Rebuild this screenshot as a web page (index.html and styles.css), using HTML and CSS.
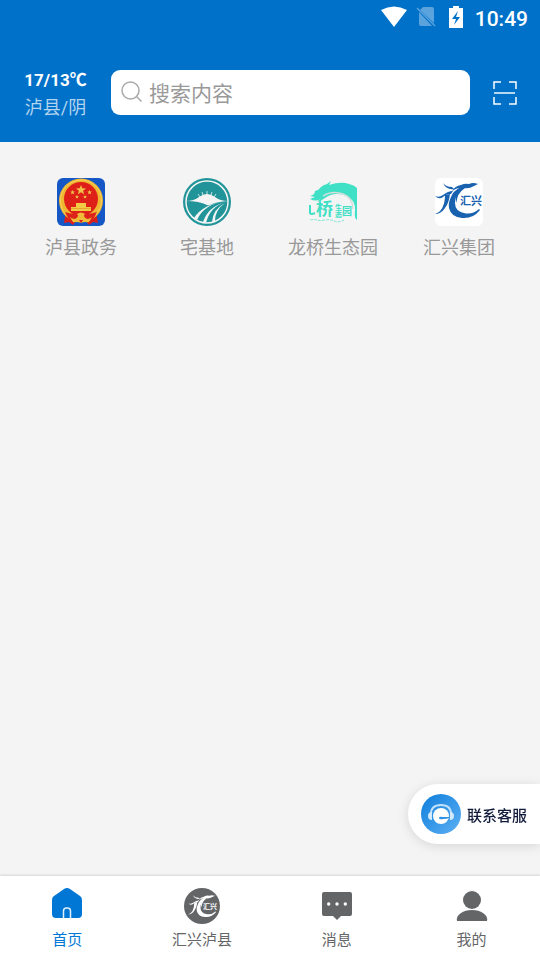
FILE: index.html
```html
<!DOCTYPE html>
<html lang="zh-CN">
<head>
<meta charset="utf-8">
<meta name="viewport" content="width=device-width, initial-scale=1">
<title>首页</title>
<link rel="stylesheet" href="styles.css">
</head>
<body>
<svg class="defs" aria-hidden="true">
  <symbol id="crane" viewBox="0 0 48 48">
    <path d="M8 5q3 4 9 4l2 2q-8 1-11-6z"/>
    <path d="M0 18q4 2 8-1 5-4 10-4l-2 3q-5 0-8 3-4 3-8-1z"/>
    <path d="M10 17l5-1q-1 9-5 14-4 6-10 6 7-3 8-8 2-4 2-11z"/>
    <path d="M17 13q3-5 9-6 4-2 8-1 4-2 9 0l-4 2q-5 3-10 2-6-1-12 3z"/>
    <path d="M26 9q-8 4-10 10-3 6-2 11 2 9 13 10 11 1 18-8l-1-1q-7 6-15 4-9-2-9-10 0-10 9-16z"/>
    <path d="M30 10q-9 6-8 15-4-9 4-15z"/>
  </symbol>
</svg>
<div class="app">
  <header class="top">
    <div class="status">
      <svg width="26" height="22" viewBox="0 0 26 22"><path d="M0 4Q13-3 26 4L13 21z" fill="#fff"/></svg>
      <svg class="sim" width="20" height="22" viewBox="0 0 20 22"><path d="M7 1h9q2 0 2 2v14L4 4zM3 6l13 14H5q-2 0-2-2z" fill="#5ba3dc"/><path d="M1 2l18 18" stroke="#5ba3dc" stroke-width="1.5"/></svg>
      <svg class="battery" width="14" height="22" viewBox="0 0 14 22"><path d="M4 0h6v2h4v20H0V2h4z" fill="#fff"/><path d="M9 5l-6 8h4l-2 6 6-8H7z" fill="#0071c9"/></svg>
      <time>10:49</time>
    </div>
    <div class="toolbar">
      <div class="weather"><strong>17/13℃</strong><span>泸县/阴</span></div>
      <label class="search">
        <svg width="22" height="22" viewBox="0 0 22 22" fill="none" stroke="#aaa" stroke-width="1.5"><circle cx="9.500" cy="9.500" r="8.500"/><path d="M15.500 15.500l5 5"/></svg>
        <input type="search" placeholder="搜索内容" aria-label="搜索内容">
      </label>
      <button class="scan" type="button" aria-label="扫一扫">
        <svg width="24" height="24" viewBox="0 0 24 24" fill="none" stroke="#fff" stroke-width="1.500"><path d="M1 8V1h7M16 1h7v7M23 16v7h-7M8 23H1v-7"/><path d="M1 12h21" stroke="#b5d7f0" stroke-width="2"/></svg>
      </button>
    </div>
  </header>

  <main>
    <nav class="shortcuts" aria-label="应用">
      <a href="#gov">
        <svg width="48" height="48" viewBox="0 0 48 48">
          <rect width="48" height="48" rx="6" fill="#1558c5"/>
          <path d="M9 34l-2 11 5-1 4 3 3-4h10l3 4 4-3 5 1-2-11z" fill="#d91f1b"/>
          <circle cx="24" cy="22.500" r="22" fill="#efb632"/>
          <circle cx="24" cy="22.500" r="20.500" fill="none" stroke="#f8d15a"/>
          <circle cx="24" cy="21" r="17" fill="#df2018"/>
          <path d="M24 7l1.300 3.300 3.700.2-2.900 2.200 1 3.500-3.100-2-3.100 2 1-3.500-2.900-2.200 3.700-.2zM15.500 12l.7 1.500 1.600.1-1.200 1 .4 1.600-1.500-.8-1.400.8.4-1.600-1.200-1 1.500-.1zM32.500 12l.7 1.500 1.600.1-1.200 1 .4 1.600-1.500-.8-1.400.8.4-1.600-1.200-1 1.500-.1zM20 17l.6 1.200 1.300.1-1 .9.300 1.300-1.200-.7-1.200.7.300-1.300-1-.9 1.300-.1zM28 17l.6 1.200 1.300.1-1 .9.300 1.300-1.200-.7-1.200.7.300-1.300-1-.9 1.300-.1z" fill="#efc34a"/>
          <path d="M19 25h10v4h5v4H14v-4h5z" fill="#f2cb45"/>
          <path d="M14 30.500h20" stroke="#e9a52e"/>
          <path d="M8 34q8 3 12 1h8q4 2 12-1l-4 8q-7 1-9-4h-6q-2 5-9 4z" fill="#dc241c"/>
          <path d="M20 36q4-3 8 0l-2 3 4 2q3 0 5-2l-3 5q-3 1-5-1-3 3-6 0-2 2-5 1l-3-5q2 2 5 2l4-2z" fill="#efbd39"/>
          <path d="M22 42h4l-2 3z" fill="#df2018"/>
        </svg>
        <span>泸县政务</span>
      </a>
      <a href="#homestead">
        <svg width="48" height="48" viewBox="0 0 48 48">
          <circle cx="24" cy="24" r="24" fill="#209499"/>
          <circle cx="24" cy="24" r="21" fill="none" stroke="#f4f4f4" stroke-width="1.500"/>
          <path d="M3 23q8 0 13-4 4-3 8-3t8 3q5 4 13 4-11 1-16 3-4 2-5 1-8-4-21-4z" fill="#f4f4f4"/>
          <path d="M24 17v-4M20 17l-1-3M28 17l1-3M17 19l-2-3M31 19l2-3" stroke="#f4f4f4" stroke-width=".8"/>
          <path d="M43 23q-23 3-32 17l3 2q7-16 29-19zM42 24q-17 5-22 20l3 1q4-16 19-21zM42 25q-10 7-10 18l-3 1q1-13 13-19z" fill="#f4f4f4"/>
        </svg>
        <span>宅基地</span>
      </a>
      <a href="#garden">
        <svg width="48" height="48" viewBox="0 0 48 48" fill="#3fe0c5">
          <path d="M1 18q5-1 5-5 4-1 6-4 2-2 6-3l4-3-2 4q12-4 20-1 5 1 8 4v32q-3-2-2-9 1-12-11-16-11-3-19 3-4 3-8 4l4-3q-5 3-11 0l5-2z"/>
          <path d="M14 18q9-6 20-2 10 4 10 15" fill="none" stroke="#d5dfdd" stroke-width="1.500"/>
          <path d="M1 27v8q1 2 5 0" fill="none" stroke="#3fe0c5" stroke-width="2"/>
          <text class="art-bridge" x="7" y="37">桥</text>
          <text class="art-eco" x="26" y="32">生</text>
          <text class="art-eco" x="26" y="39">态</text>
          <text class="art-garden" x="33" y="37">园</text>
          <path d="M1 42q4-1 7 0t8 0 9 1 10-1" fill="none" stroke="#83e7d6" stroke-dasharray="3 1"/>
        </svg>
        <span>龙桥生态园</span>
      </a>
      <a href="#group">
        <svg width="48" height="48" viewBox="0 0 48 48" fill="#1862b0"><rect width="48" height="48" rx="6" fill="#fff"/><use href="#crane"/><text class="art-name" x="25" y="27">汇兴</text></svg>
        <span>汇兴集团</span>
      </a>
    </nav>
  </main>

  <button class="service" type="button">
    <svg width="40" height="40" viewBox="0 0 40 40">
      <defs><linearGradient id="sky" x1="0" y1="0" x2="1" y2="1"><stop stop-color="#0d7edb"/><stop offset="1" stop-color="#5eb0f4"/></linearGradient></defs>
      <circle cx="20" cy="20" r="20" fill="url(#sky)"/>
      <path d="M10 20q0-9 10-9t10 9" fill="none" stroke="#c2e1fa" stroke-width="2"/>
      <path d="M11 18v8q-4 0-4-4t4-4zM29 18v8q4 0 4-4t-4-4z" fill="#d3eafc"/>
      <circle cx="20" cy="22" r="8" fill="#fff"/>
      <path d="M28 23h-6q-4-1-4 1t4 1q4 0 6-1" fill="#2d91e5"/>
    </svg>
    <span>联系客服</span>
  </button>

  <nav class="tabs" aria-label="主导航">
    <a class="active" href="#home" aria-current="page">
      <svg width="36" height="36" viewBox="0 0 36 36"><path d="M15 1q3-2 6 0l10 7q2 1 2 4v14q0 4-4 4H7q-4 0-4-4V12q0-3 2-4z" fill="#0077d5"/><path d="M14.500 30v-7q0-3 3-3h1q3 0 3 3v7" fill="none" stroke="#dff0fc" stroke-width="1.500"/></svg>
      <span>首页</span>
    </a>
    <a href="#luxian">
      <svg width="36" height="36" viewBox="0 0 36 36"><circle cx="18" cy="18" r="18" fill="#646567"/><g fill="#fff"><use href="#crane" x="4" y="4" width="30" height="30"/><text class="art-small" x="19" y="21">汇兴</text></g></svg>
      <span>汇兴泸县</span>
    </a>
    <a href="#messages">
      <svg width="36" height="36" viewBox="0 0 36 36"><path d="M5 4h26q2 0 2 2v20q0 2-2 2h-9l-4 4-4-4H5q-2 0-2-2V6q0-2 2-2z" fill="#646567"/><g fill="#fff"><circle cx="9.700" cy="16" r="1.700"/><circle cx="18" cy="16" r="1.700"/><circle cx="26.300" cy="16" r="1.700"/></g></svg>
      <span>消息</span>
    </a>
    <a href="#me">
      <svg width="36" height="36" viewBox="0 0 36 36" fill="#646567"><circle cx="18" cy="12" r="9"/><path d="M3 33q-1-5 4-8 4-3 11-3t11 3q5 3 4 8z"/></svg>
      <span>我的</span>
    </a>
  </nav>
</div>
</body>
</html>
```
FILE: styles.css
```css
* { box-sizing: border-box; }

body {
  margin: 0;
  background: #f4f4f4;
  font-family: Roboto, "Noto Sans CJK SC", sans-serif;
}

svg { display: block; flex: none; }
a { color: inherit; text-decoration: none; }
button { border: 0; padding: 0; background: none; font: inherit; cursor: pointer; }

.defs { position: absolute; width: 0; height: 0; }

.app { display: flex; flex-direction: column; min-height: 100vh; }

.top { background: #0071c9; color: #fff; padding-bottom: 27px; }

.status {
  display: flex;
  align-items: center;
  justify-content: flex-end;
  height: 34px;
  padding: 0 12px;
}
.sim { margin-left: 9px; }
.battery { margin: 0 12px 0 13px; }
.status time { font-size: 21px; line-height: 24px; font-weight: 500; padding-top: 3px; }

.toolbar { display: flex; align-items: center; padding-top: 36px; }

.weather {
  flex: none;
  width: 111px;
  text-align: center;
  font-size: 18px;
  line-height: 28px;
  display: flex;
  flex-direction: column;
  margin: -7px 0;
  padding-top: 2px;
}
.weather strong { font-size: 17px; }
.weather span { color: #b2d4ef; }

.search {
  flex: 1;
  min-width: 0;
  height: 45px;
  padding: 0 10px;
  display: flex;
  align-items: center;
  gap: 6px;
  background: #fff;
  border-radius: 9px;
}
.search svg { margin-bottom: 2px; }
.search input {
  flex: 1;
  min-width: 0;
  border: 0;
  outline: 0;
  padding: 2px 0 0;
  background: none;
  font: 21px/30px Roboto, "Noto Sans CJK SC", sans-serif;
  color: #333;
}
.search input::placeholder { color: #999; opacity: 1; }

.scan { flex: none; width: 70px; display: grid; place-items: center; }

main { flex: 1; }

.shortcuts {
  display: grid;
  grid-template-columns: repeat(4, 1fr);
  padding: 36px 18px;
  color: #999;
  font-size: 18px;
  line-height: 26px;
}
.shortcuts a {
  display: flex;
  flex-direction: column;
  align-items: center;
  gap: 9px;
  white-space: nowrap;
}

.art-bridge { font-size: 17px; font-weight: 700; }
.art-eco { font-size: 7px; font-weight: 700; }
.art-garden { font-size: 10px; font-weight: 700; }
.art-name { font-size: 11px; font-weight: 700; }
.art-small { font-size: 7px; font-weight: 700; }

.service {
  position: fixed;
  right: 0;
  bottom: 116px;
  display: flex;
  align-items: center;
  gap: 6px;
  height: 60px;
  padding: 0 13px;
  border-radius: 30px 0 0 30px;
  background: #fff;
  box-shadow: 0 2px 12px rgba(0, 0, 0, 0.12);
  color: #111b3a;
  font-size: 15px;
  font-weight: 500;
}

.tabs {
  display: grid;
  grid-template-columns: repeat(4, 1fr);
  background: #fff;
  box-shadow: 0 -1px 2px rgba(0, 0, 0, 0.12);
  padding: 12px 1px 8px 0;
  color: #646567;
  font-size: 15px;
  line-height: 23px;
}
.tabs a {
  display: flex;
  flex-direction: column;
  align-items: center;
  gap: 5px;
}
.tabs .active { color: #0077d5; }
```
